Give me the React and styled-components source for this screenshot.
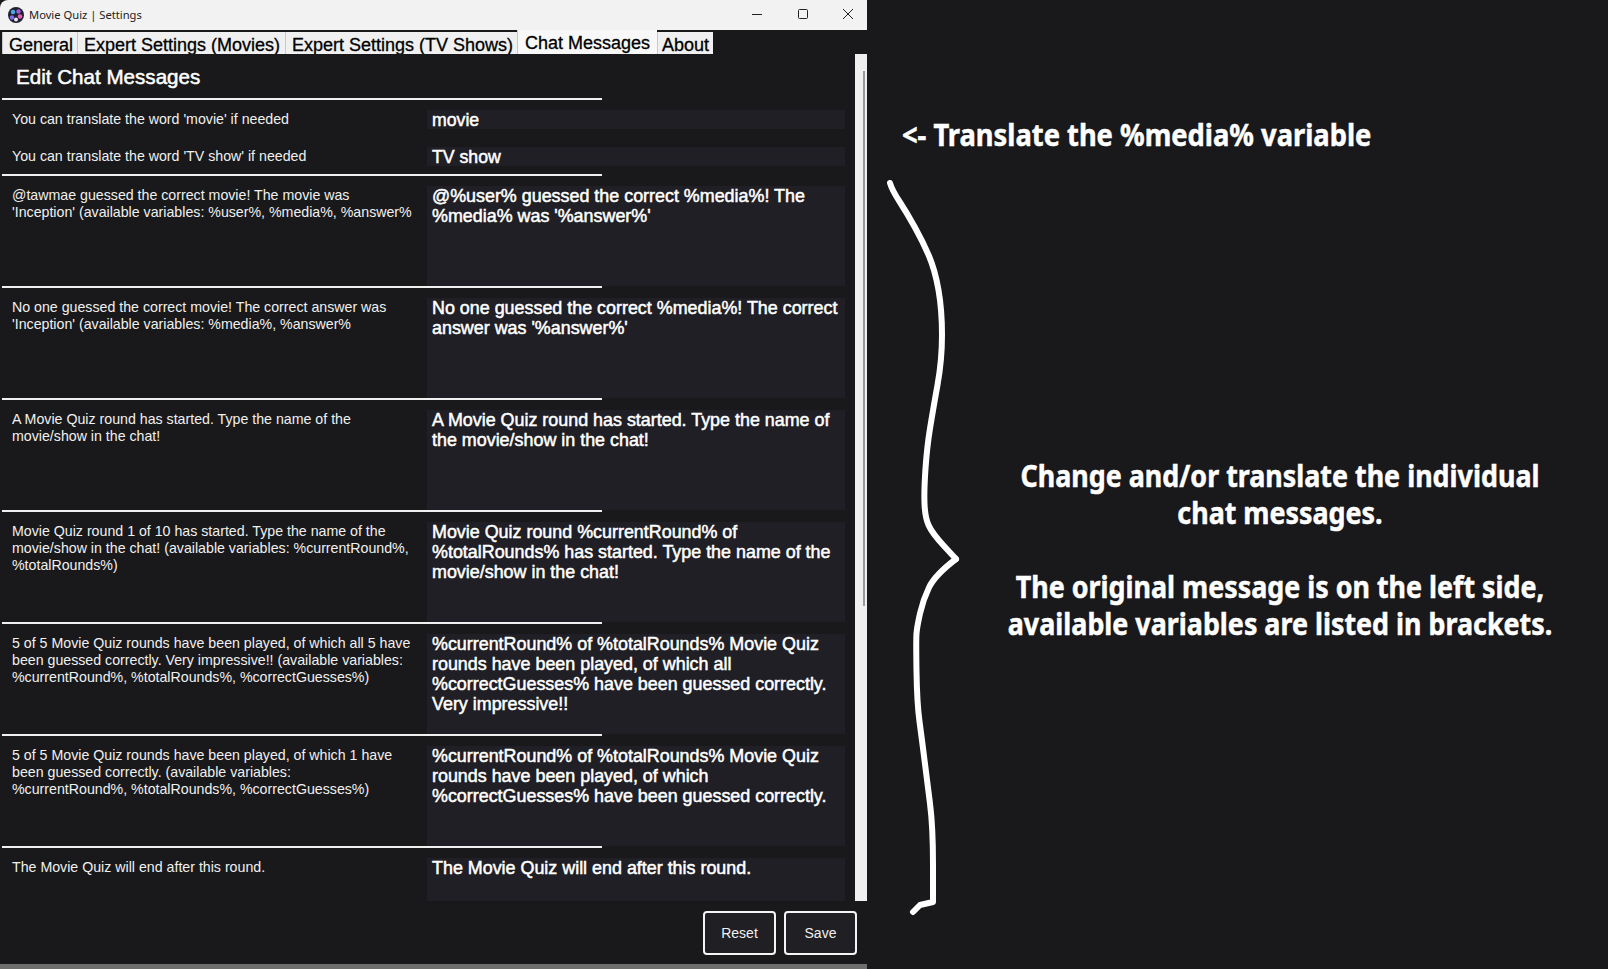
import React from 'react';
import styled, { createGlobalStyle } from 'styled-components';

const messages = [
  { original: "@tawmae guessed the correct movie! The movie was\n'Inception' (available variables: %user%, %media%, %answer%", value: "@%user% guessed the correct %media%! The %media% was '%answer%'" },
  { original: "No one guessed the correct movie! The correct answer was\n'Inception' (available variables: %media%, %answer%", value: "No one guessed the correct %media%! The correct answer was '%answer%'" },
  { original: "A Movie Quiz round has started. Type the name of the\nmovie/show in the chat!", value: "A Movie Quiz round has started. Type the name of the movie/show in the chat!" },
  { original: "Movie Quiz round 1 of 10 has started. Type the name of the\nmovie/show in the chat! (available variables: %currentRound%,\n%totalRounds%)", value: "Movie Quiz round %currentRound% of %totalRounds% has started. Type the name of the movie/show in the chat!" },
  { original: "5 of 5 Movie Quiz rounds have been played, of which all 5 have\nbeen guessed correctly. Very impressive!! (available variables:\n%currentRound%, %totalRounds%, %correctGuesses%)", value: "%currentRound% of %totalRounds% Movie Quiz rounds have been played, of which all %correctGuesses% have been guessed correctly. Very impressive!!" },
  { original: "5 of 5 Movie Quiz rounds have been played, of which 1 have\nbeen guessed correctly. (available variables:\n%currentRound%, %totalRounds%, %correctGuesses%)", value: "%currentRound% of %totalRounds% Movie Quiz rounds have been played, of which %correctGuesses% have been guessed correctly." },
  { original: "The Movie Quiz will end after this round.", value: "The Movie Quiz will end after this round." },
];

const tabs = [
  { label: 'General', width: 75, inset: 6 },
  { label: 'Expert Settings (Movies)', width: 208, inset: 6 },
  { label: 'Expert Settings (TV Shows)', width: 232, inset: 6 },
  { label: 'Chat Messages', width: 140, inset: 7, active: true },
  { label: 'About', width: 56, inset: 4 },
];

// the hand drawn brace, upper and lower half meet at the tip
const braceUpper = [
  [5, 5], [7, 12], [22, 35], [38, 64], [50, 92], [57, 132], [57, 182], [48, 232], [42, 269],
  [39, 312], [40, 339], [47, 355], [71, 381],
];
const braceLower = [
  [71, 381], [50, 397], [38, 422], [32, 449], [31, 462], [32, 525], [37, 562], [42, 602], [48, 649], [48, 724],
];

const smoothPath = (points) => {
  let d = `M${points[0].join(' ')}`;
  for (let i = 1; i < points.length - 1; i++) {
    const midX = (points[i][0] + points[i + 1][0]) / 2;
    const midY = (points[i][1] + points[i + 1][1]) / 2;
    d += ` Q${points[i].join(' ')} ${midX} ${midY}`;
  }
  return `${d} L${points[points.length - 1].join(' ')}`;
};

function App() {
  return (
    <Page>
      <GlobalStyle />
      <Window>
        <TitleBar>
          <TitleLeft>
            <svg width="16" height="16" viewBox="0 0 16 16">
              <circle cx="8" cy="8" r="8" fill="#20202e" />
              <circle cx="5" cy="5" r="2.3" fill="#4aa8e8" />
              <circle cx="10.5" cy="4.5" r="2.2" fill="#a65ae0" />
              <circle cx="12" cy="9.5" r="2.2" fill="#e65fc0" />
              <circle cx="8" cy="12.5" r="2" fill="#e8e0f5" />
              <circle cx="4" cy="10.5" r="2.2" fill="#7f6be8" />
              <circle cx="8" cy="8" r="1.6" fill="#20202e" />
            </svg>
            <TitleText>Movie Quiz | Settings</TitleText>
          </TitleLeft>
          <Controls>
            <svg width="12" height="12" viewBox="0 0 12 12"><path d="M1 6.5h10" stroke="#222" fill="none" /></svg>
            <svg width="12" height="12" viewBox="0 0 12 12"><rect x="1.5" y="1.5" width="9" height="9" rx="1" stroke="#222" fill="none" /></svg>
            <svg width="12" height="12" viewBox="0 0 12 12"><path d="M1 1l10 10M11 1L1 11" stroke="#222" fill="none" /></svg>
          </Controls>
        </TitleBar>
        <TabBar>
          {tabs.map((tab) => (
            <Tab key={tab.label} $active={tab.active} $width={tab.width} $inset={tab.inset}>{tab.label}</Tab>
          ))}
        </TabBar>
        <Body>
          <Scroller>
            <Heading>Edit Chat Messages</Heading>
            <Divider />
            <ShortRow>
              <Label>You can translate the word 'movie' if needed</Label>
              <ShortField>movie</ShortField>
            </ShortRow>
            <ShortRow $last>
              <Label>You can translate the word 'TV show' if needed</Label>
              <ShortField>TV show</ShortField>
            </ShortRow>
            {messages.map((msg) => (
              <React.Fragment key={msg.value}>
                <Divider />
                <MessageRow>
                  <Label>{msg.original}</Label>
                  <MessageField>{msg.value}</MessageField>
                </MessageRow>
              </React.Fragment>
            ))}
          </Scroller>
          <Scrollbar><Thumb /></Scrollbar>
        </Body>
        <Footer>
          <FooterButton>Reset</FooterButton>
          <FooterButton>Save</FooterButton>
        </Footer>
        <BottomEdge />
      </Window>
      <Notes>
        <VariableNote>&lt;- Translate the %media% variable</VariableNote>
        <BraceRow>
          <svg width="76" height="740" viewBox="0 0 76 740">
            <g fill="none" stroke="#fff" strokeWidth="6" strokeLinecap="round" strokeLinejoin="round">
              <path d={smoothPath(braceUpper)} />
              <path d={`${smoothPath(braceLower)} L35 727 L28 734`} />
            </g>
          </svg>
          <Explanation>
            <p>Change and/or translate the individual<br />chat messages.</p>
            <p>The original message is on the left side,<br />available variables are listed in brackets.</p>
          </Explanation>
        </BraceRow>
      </Notes>
    </Page>
  );
}

const GlobalStyle = createGlobalStyle`
  html, body {
    margin: 0;
    padding: 0;
    background-color: #19191b;
  }
`;

const Page = styled.div`
  display: flex;
  width: 1608px;
  height: 969px;
  overflow: hidden;
  background-color: #19191b;
  font-family: "Liberation Sans", Arial, sans-serif;
`;

const Window = styled.div`
  display: flex;
  flex-direction: column;
  width: 867px;
  height: 969px;
  flex-shrink: 0;
`;

const TitleBar = styled.div`
  display: flex;
  justify-content: space-between;
  align-items: center;
  height: 30px;
  flex-shrink: 0;
  padding-left: 8px;
  background-color: #f2f2f2;
  border-top-left-radius: 8px;
`;

const TitleLeft = styled.div`
  display: flex;
  align-items: center;
  gap: 5px;
`;

const TitleText = styled.span`
  padding-bottom: 1px;
  font-family: "Noto Sans", sans-serif;
  font-size: 11.2px;
  color: #222;
`;

const Controls = styled.div`
  display: flex;
  align-items: center;
  gap: 33.5px;
  padding: 0 13px 2px 0;
`;

const TabBar = styled.div`
  display: flex;
  align-items: flex-end;
  height: 24px;
  flex-shrink: 0;
  padding-left: 2px;
`;

const Tab = styled.div`
  width: ${(props) => props.$width}px;
  height: ${(props) => (props.$active ? '24px' : '22px')};
  padding-left: ${(props) => props.$inset}px;
  box-sizing: border-box;
  overflow: hidden;
  line-height: 26px;
  font-size: 18px;
  color: #000;
  white-space: nowrap;
  background-color: ${(props) => (props.$active ? '#f8f8f8' : '#f0f0f0')};
  border-left: 1px solid #c8c8c8;
  -webkit-text-stroke: 0.3px #000;
`;

const Body = styled.div`
  display: flex;
  height: 847px;
  flex-shrink: 0;
`;

const Scroller = styled.div`
  flex: 1;
  min-width: 0;
  overflow: hidden;
`;

const Heading = styled.h1`
  margin: 0;
  height: 44px;
  padding-left: 16px;
  font-size: 20.6px;
  font-weight: 400;
  line-height: 46px;
  color: #fff;
  -webkit-text-stroke: 0.5px #fff;
`;

const Divider = styled.div`
  width: 600px;
  height: 2px;
  margin-left: 2px;
  background-color: #f0f0f0;
`;

const ShortRow = styled.div`
  display: flex;
  height: 19px;
  margin: 10px 0 ${(props) => (props.$last ? '8px' : '18px')};
`;

const MessageRow = styled.div`
  display: flex;
  height: 100px;
  margin-top: 10px;
`;

const Label = styled.div`
  width: 415px;
  flex-shrink: 0;
  padding: 1px 0 0 12px;
  box-sizing: border-box;
  font-size: 14.2px;
  line-height: 17px;
  color: #f0f0f0;
  white-space: pre;
`;

const ShortField = styled.div`
  width: 418px;
  margin-left: 12px;
  padding: 0 5px;
  box-sizing: border-box;
  background-color: #1f1f25;
  font-size: 17.7px;
  line-height: 20px;
  color: #fff;
  -webkit-text-stroke: 0.5px #fff;
`;

const MessageField = styled(ShortField)`
  font-size: 17.9px;
`;

const Scrollbar = styled.div`
  position: relative;
  width: 12px;
  flex-shrink: 0;
  background-color: #f0f0f0;
`;

const Thumb = styled.div`
  position: absolute;
  top: 17px;
  right: 2px;
  width: 2px;
  height: 535px;
  background-color: #9a9a9a;
`;

const Footer = styled.div`
  display: flex;
  justify-content: flex-end;
  gap: 8px;
  height: 63px;
  padding: 10px 10px 0 0;
  box-sizing: border-box;
  flex-shrink: 0;
`;

const FooterButton = styled.button`
  width: 73px;
  height: 44px;
  border: 2px solid #f4f4f4;
  border-radius: 4px;
  background-color: #1f1f24;
  color: #f0f0f0;
  font-family: "Liberation Sans", Arial, sans-serif;
  font-size: 14px;
`;

const BottomEdge = styled.div`
  height: 5px;
  flex-shrink: 0;
  background-color: #6e6e6e;
`;

const Notes = styled.div`
  flex: 1;
  min-width: 0;
  display: flex;
  flex-direction: column;
  color: #fff;
`;

const VariableNote = styled.div`
  margin: 115px 0 0 35px;
  height: 40px;
  font-family: "Noto Sans", sans-serif;
  font-size: 30px;
  font-weight: 700;
  line-height: 40px;
  white-space: nowrap;
  -webkit-text-stroke: 0.5px #fff;
  transform: scaleX(0.91);
  transform-origin: left center;
`;

const BraceRow = styled.div`
  display: flex;
  align-items: center;
  margin: 23px 0 0 18px;
`;

const Explanation = styled.div`
  flex: 1;
  margin-left: -9px;
  padding-top: 40px;
  font-family: "Noto Sans", sans-serif;
  font-size: 30px;
  font-weight: 700;
  line-height: 37px;
  text-align: center;
  white-space: nowrap;
  -webkit-text-stroke: 0.5px #fff;
  transform: scaleX(0.895);

  p {
    margin: 0 0 37px;
  }
`;

export default App;
